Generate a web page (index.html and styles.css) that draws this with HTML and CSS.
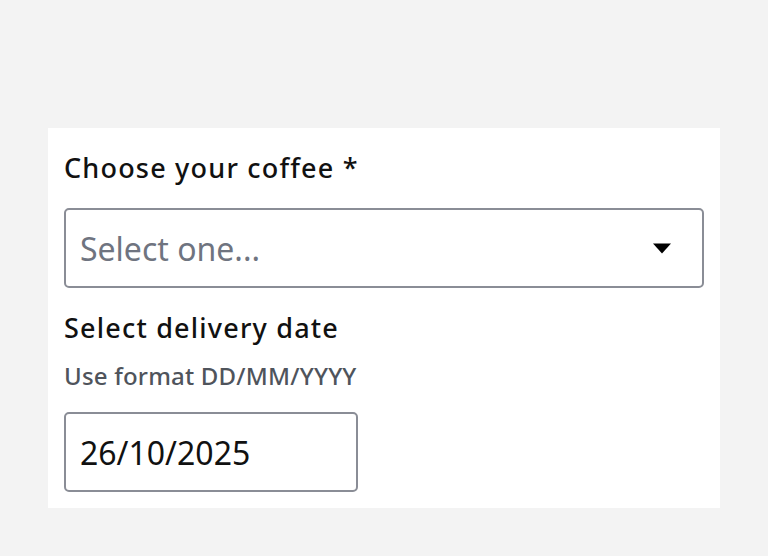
FILE: index.html
```html
<!DOCTYPE html>
<html lang="en">
<head>
<meta charset="utf-8">
<title>Coffee order</title>
<link rel="stylesheet" href="styles.css">
</head>
<body>
<main class="page">
  <form class="card">
    <label class="label" for="coffee">Choose your coffee *</label>
    <div class="select-box">
      <select id="coffee" class="select">
        <option>Select one...</option>
      </select>
      <svg class="caret" width="18" height="12" viewBox="0 0 18 12" aria-hidden="true"><path d="M0 1.5 L18 1.5 L9 11.5 Z" fill="#000"/></svg>
    </div>
    <label class="label label-date" for="date">Select delivery date</label>
    <p class="hint">Use format DD/MM/YYYY</p>
    <input id="date" class="date" type="text" value="26/10/2025">
  </form>
</main>
</body>
</html>
```
FILE: styles.css
```css
html, body {
  margin: 0;
  padding: 0;
  background: #f3f3f3;
  font-family: "Noto Sans", "Open Sans", sans-serif;
}
.page {
  padding: 128px 48px 0 48px;
}
.card {
  background: #ffffff;
  padding: 23px 16px 16px 16px;
  display: flex;
  flex-direction: column;
  align-items: flex-start;
}
.label {
  font-size: 27px;
  line-height: 33px;
  font-weight: 550;
  letter-spacing: 1.2px;
  color: #111111;
}
.select-box {
  margin-top: 24px;
  box-sizing: border-box;
  width: 640px;
  height: 80px;
  border: 2px solid #8a8d96;
  border-radius: 5px;
  display: flex;
  align-items: center;
  padding: 0 31px 0 0;
}
.select {
  flex: 1;
  appearance: none;
  -webkit-appearance: none;
  border: none;
  background: transparent;
  font-family: inherit;
  font-size: 32px;
  color: #6f7480;
  padding: 0 14px;
  outline: none;
}
.caret {
  display: block;
}
.label-date {
  margin-top: 23px;
}
.hint {
  margin: 18px 0 0 0;
  font-size: 24px;
  line-height: 28px;
  font-weight: 500;
  letter-spacing: 0.2px;
  color: #4f545c;
}
.date {
  margin-top: 22px;
  box-sizing: border-box;
  width: 294px;
  height: 80px;
  border: 2px solid #8a8d96;
  border-radius: 5px;
  padding: 0 14px;
  font-family: inherit;
  font-size: 32px;
  color: #111111;
  background: #ffffff;
  outline: none;
}
```
